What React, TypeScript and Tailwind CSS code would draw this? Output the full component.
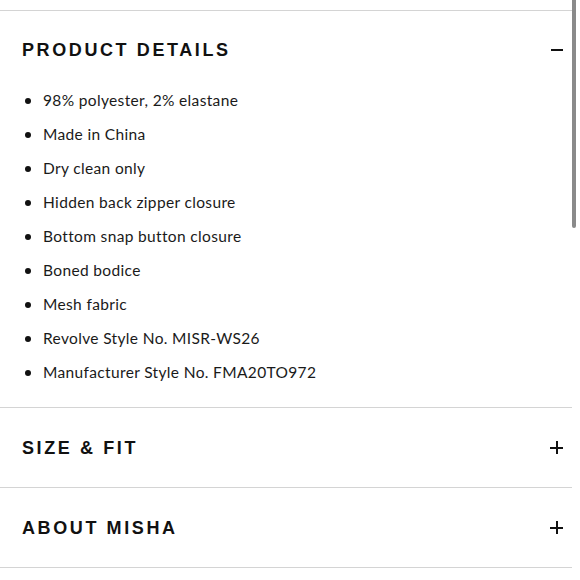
const details = [
  '98% polyester, 2% elastane',
  'Made in China',
  'Dry clean only',
  'Hidden back zipper closure',
  'Bottom snap button closure',
  'Boned bodice',
  'Mesh fabric',
  'Revolve Style No. MISR-WS26',
  'Manufacturer Style No. FMA20TO972',
];

function Minus() {
  return <span className="block w-[12px] h-[2.5px] bg-[#111]" />;
}

function Plus() {
  return (
    <span className="relative block w-[13px] h-[13px]">
      <span className="absolute left-0 top-[5.5px] w-[13px] h-[2px] bg-[#111]" />
      <span className="absolute top-0 left-[5.5px] w-[2px] h-[13px] bg-[#111]" />
    </span>
  );
}

function Heading({ children }: { children: string }) {
  return (
    <h2 className="font-['Liberation_Sans',sans-serif] font-bold text-[18px] leading-[22px] tracking-[2.6px] text-[#111]">
      {children}
    </h2>
  );
}

export default function App() {
  return (
    <div className="relative w-[580px] h-[580px] bg-white overflow-hidden font-['Lato',sans-serif]">
      <div className="w-[572px] pt-[10px]">

        {/* ── Product details (open) ── */}
        <section className="border-t border-b border-[#d4d4d4] pb-[17px]">
          <div className="flex items-center justify-between pt-[28px] pl-[22px] pr-[9px]">
            <Heading>PRODUCT DETAILS</Heading>
            <Minus />
          </div>
          <ul className="mt-[23px]">
            {details.map(item => (
              <li key={item} className="flex items-center h-[34px] pl-[25px]">
                <span className="w-[6px] h-[6px] rounded-full bg-[#111]" />
                <span className="ml-[12px] text-[15.5px] tracking-[0.35px] text-[#1a1a1a]">{item}</span>
              </li>
            ))}
          </ul>
        </section>

        {/* ── Collapsed sections ── */}
        {['SIZE & FIT', 'ABOUT MISHA'].map(title => (
          <section key={title} className="h-[80px] border-b border-[#d4d4d4] flex items-center justify-between pl-[22px] pr-[9px]">
            <Heading>{title}</Heading>
            <Plus />
          </section>
        ))}
      </div>

      {/* scrollbar */}
      <div className="absolute top-0 left-[572px] w-[4px] h-[228px] rounded-b-full bg-[#8a8a8a]" />
    </div>
  );
}
